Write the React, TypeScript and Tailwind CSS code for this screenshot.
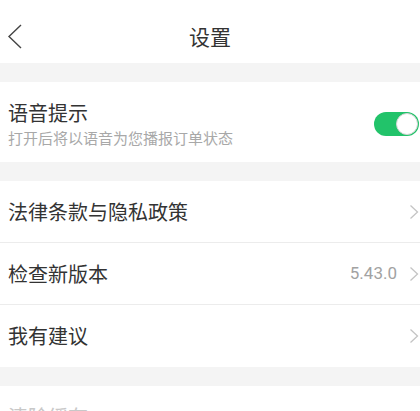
import React, { useState } from "react";

const FONT = "font-['Noto_Sans_CJK_SC','Noto_Sans',sans-serif]";

function Chevron() {
    return (
        <svg width="10" height="16" viewBox="0 0 10 16" className="shrink-0">
            <polyline points="1.5,1.5 8.5,8 1.5,14.5" fill="none" stroke="#c4c4c4" strokeWidth="1.3" />
        </svg>
    );
}

function Row({ title, value, last }: { title: string; value?: string; last?: boolean }) {
    return (
        <div className={`flex h-[62px] items-center justify-between bg-white pl-[8px] pr-[1px] ${last ? "" : "border-b border-[#ececec]"}`}>
            <span className="text-[20px] text-[#333]">{title}</span>
            <div className="flex items-center gap-[12px]">
                {value && <span className="font-['Roboto',sans-serif] text-[17px] text-[#a2a2a2]">{value}</span>}
                <Chevron />
            </div>
        </div>
    );
}

export default function App() {
    const [voiceOn, setVoiceOn] = useState(true);

    return (
        <div className={`h-[411px] w-[420px] overflow-hidden bg-[#f4f4f4] ${FONT}`}>
            {/* header */}
            <div className="relative flex h-[63px] items-center justify-center bg-white pt-[11px]">
                <svg width="16" height="26" viewBox="0 0 16 26" className="absolute left-[7px] top-[24px]">
                    <polyline points="14,1 2,12.5 14,24" fill="none" stroke="#444" strokeWidth="1.4" />
                </svg>
                <span className="text-[21px] text-[#333]">设置</span>
            </div>

            {/* voice prompt */}
            <div className="mt-[19px] flex h-[80px] items-center justify-between bg-white pl-[8px] pt-[4px]">
                <div className="flex flex-col">
                    <span className="text-[20px] leading-[24px] text-[#333]">语音提示</span>
                    <span className="mt-[4px] text-[15px] leading-[18px] text-[#a8a8a8]">打开后将以语音为您播报订单状态</span>
                </div>
                <button
                    type="button"
                    onClick={() => setVoiceOn(!voiceOn)}
                    className={`mr-[1px] flex h-[24px] w-[45px] items-center rounded-full p-[1px] ${voiceOn ? "justify-end bg-[#22c36a]" : "justify-start bg-[#e5e5e5]"}`}
                >
                    <span className="h-[22px] w-[22px] rounded-full border border-[#d6d6d6] bg-white" />
                </button>
            </div>

            {/* links */}
            <div className="mt-[19px]">
                <Row title="法律条款与隐私政策" />
                <Row title="检查新版本" value="5.43.0" />
                <Row title="我有建议" last />
            </div>

            <div className="mt-[19px] flex h-[62px] items-center bg-white pl-[8px]">
                <span className="text-[20px] text-[#c8c8c8]">清除缓存</span>
            </div>
        </div>
    );
}
